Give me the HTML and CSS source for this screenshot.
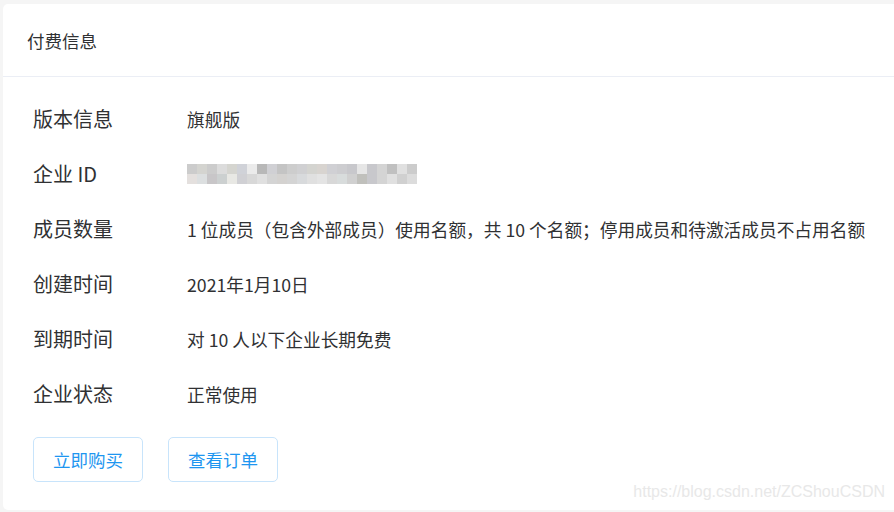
FILE: index.html
```html
<!DOCTYPE html>
<html lang="zh-CN">
<head>
    <meta charset="UTF-8">
    <meta name="viewport" content="width=device-width, initial-scale=1.0">
    <title>付费信息</title>
    <link rel="stylesheet" href="styles.css">
</head>
<body>
    <div class="card">
        <div class="card-header">付费信息</div>
        <div class="card-body">
            <div class="row">
                <div class="label">版本信息</div>
                <div class="value">旗舰版</div>
            </div>
            <div class="row">
                <div class="label">企业 ID</div>
                <div class="value">
                    <svg class="mosaic" width="230" height="20" viewBox="0 0 230 20">
                        <g>
                            <rect x="0" y="0" width="10" height="10" fill="#cccccc"/>
                            <rect x="10" y="0" width="10" height="10" fill="#d4d4d0"/>
                            <rect x="20" y="0" width="10" height="10" fill="#cccccc"/>
                            <rect x="30" y="0" width="10" height="10" fill="#dcdcdc"/>
                            <rect x="40" y="0" width="10" height="10" fill="#d5d5d0"/>
                            <rect x="50" y="0" width="10" height="10" fill="#d0d2d8"/>
                            <rect x="60" y="0" width="10" height="10" fill="#ebebeb"/>
                            <rect x="70" y="0" width="10" height="10" fill="#b8b8b8"/>
                            <rect x="80" y="0" width="10" height="10" fill="#d0d0d4"/>
                            <rect x="90" y="0" width="10" height="10" fill="#c4c4c4"/>
                            <rect x="100" y="0" width="10" height="10" fill="#cdcdcd"/>
                            <rect x="110" y="0" width="10" height="10" fill="#d0d0d2"/>
                            <rect x="120" y="0" width="10" height="10" fill="#d4d4d0"/>
                            <rect x="130" y="0" width="10" height="10" fill="#d8d4d0"/>
                            <rect x="140" y="0" width="10" height="10" fill="#d0d0d4"/>
                            <rect x="150" y="0" width="10" height="10" fill="#cdcdd0"/>
                            <rect x="160" y="0" width="10" height="10" fill="#c8c8cc"/>
                            <rect x="170" y="0" width="10" height="10" fill="#e6e6e6"/>
                            <rect x="180" y="0" width="10" height="10" fill="#c8c8cc"/>
                            <rect x="190" y="0" width="10" height="10" fill="#d4d4d4"/>
                            <rect x="200" y="0" width="10" height="10" fill="#c0c0c0"/>
                            <rect x="210" y="0" width="10" height="10" fill="#e0e0e0"/>
                            <rect x="220" y="0" width="10" height="10" fill="#cccccc"/>
                        </g>
                        <g>
                            <rect x="0" y="10" width="10" height="10" fill="#e4e0de"/>
                            <rect x="10" y="10" width="10" height="10" fill="#dcdfe0"/>
                            <rect x="20" y="10" width="10" height="10" fill="#c8c6c8"/>
                            <rect x="30" y="10" width="10" height="10" fill="#ccd0d0"/>
                            <rect x="40" y="10" width="10" height="10" fill="#e8e8e4"/>
                            <rect x="50" y="10" width="10" height="10" fill="#d0d0d4"/>
                            <rect x="60" y="10" width="10" height="10" fill="#d8d8d8"/>
                            <rect x="70" y="10" width="10" height="10" fill="#e0e0e0"/>
                            <rect x="80" y="10" width="10" height="10" fill="#d4d4d4"/>
                            <rect x="90" y="10" width="10" height="10" fill="#d4d2d0"/>
                            <rect x="100" y="10" width="10" height="10" fill="#d4d4d4"/>
                            <rect x="110" y="10" width="10" height="10" fill="#d8dadc"/>
                            <rect x="120" y="10" width="10" height="10" fill="#e0e0e0"/>
                            <rect x="130" y="10" width="10" height="10" fill="#e4e4e4"/>
                            <rect x="140" y="10" width="10" height="10" fill="#d8d8d8"/>
                            <rect x="150" y="10" width="10" height="10" fill="#d8dcdc"/>
                            <rect x="160" y="10" width="10" height="10" fill="#d0d0d0"/>
                            <rect x="170" y="10" width="10" height="10" fill="#c0c0bc"/>
                            <rect x="180" y="10" width="10" height="10" fill="#c8c8cc"/>
                            <rect x="190" y="10" width="10" height="10" fill="#d4d4d4"/>
                            <rect x="200" y="10" width="10" height="10" fill="#e0e0e0"/>
                            <rect x="210" y="10" width="10" height="10" fill="#d0d0d0"/>
                            <rect x="220" y="10" width="10" height="10" fill="#dcdcdc"/>
                        </g>
                    </svg>
                </div>
            </div>
            <div class="row">
                <div class="label">成员数量</div>
                <div class="value">1 位成员（包含外部成员）使用名额，共 10 个名额；停用成员和待激活成员不占用名额</div>
            </div>
            <div class="row">
                <div class="label">创建时间</div>
                <div class="value">2021年1月10日</div>
            </div>
            <div class="row">
                <div class="label">到期时间</div>
                <div class="value">对 10 人以下企业长期免费</div>
            </div>
            <div class="row">
                <div class="label">企业状态</div>
                <div class="value">正常使用</div>
            </div>
            <div class="actions">
                <button class="btn">立即购买</button>
                <button class="btn">查看订单</button>
            </div>
        </div>
    </div>
    <div class="watermark">https://blog.csdn.net/ZCShouCSDN</div>
</body>
</html>
```

FILE: styles.css
```css
body {
    margin: 0;
    padding: 4px 0 0 3px;
    background-color: #f5f5f5;
    font-family: "Noto Sans CJK SC", "Liberation Sans", sans-serif;
    color: #303133;
    overflow: hidden;
    height: 508px;
}

.card {
    width: 920px;
    background-color: #fff;
    border-radius: 5px;
}

.card-header {
    height: 72px;
    display: flex;
    align-items: center;
    padding-left: 24px;
    font-size: 17.5px;
    border-bottom: 1px solid #ebeef5;
}

.card-body {
    padding: 14px 30px 28px;
}

.row {
    display: flex;
    align-items: center;
    height: 55px;
}

.label {
    width: 154px;
    flex-shrink: 0;
    font-size: 20px;
}

.value {
    font-size: 17.7px;
    display: flex;
    align-items: center;
}

.mosaic {
    display: block;
}

.actions {
    display: flex;
    gap: 25px;
    margin-top: 16px;
}

.btn {
    width: 110px;
    height: 45px;
    background-color: #fff;
    border: 1px solid #c8e4fb;
    border-radius: 5px;
    color: #1e96f0;
    font-family: inherit;
    font-size: 17.5px;
    padding: 0;
}

.watermark {
    position: absolute;
    right: 9px;
    bottom: 11px;
    font-family: "Liberation Sans", Arial, sans-serif;
    font-size: 16px;
    color: #e8e8e8;
}
```
